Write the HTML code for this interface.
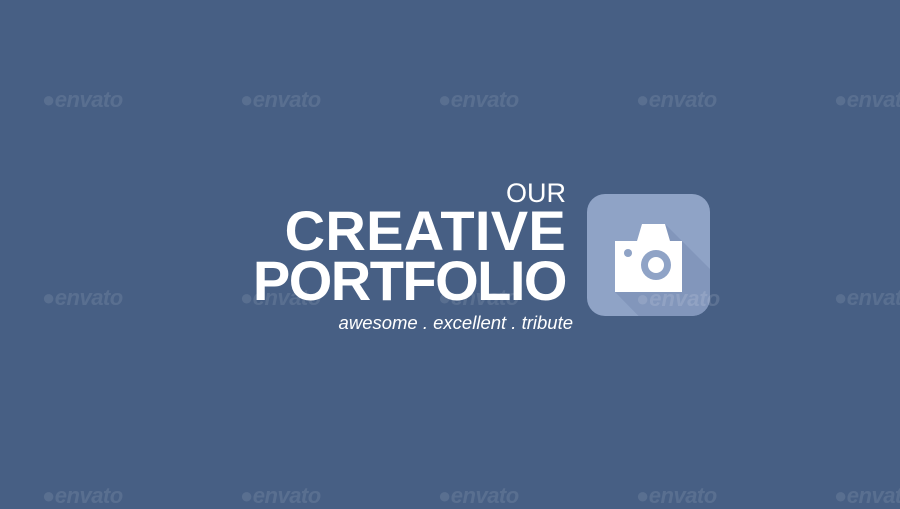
<!DOCTYPE html>
<html><head><style>
html,body{margin:0;padding:0;}
body{width:900px;height:506px;background:#475f84;position:relative;overflow:hidden;font-family:"Liberation Sans",sans-serif;}
.wm{position:absolute;color:rgba(255,255,255,0.1);font:italic bold 22px "Liberation Sans",sans-serif;letter-spacing:-0.5px;}
.t{position:absolute;color:#fff;text-align:right;right:334px;white-space:nowrap;}
</style></head><body>
<div class="wm" style="left:42px;top:87px">●envato</div>
<div class="wm" style="left:240px;top:87px">●envato</div>
<div class="wm" style="left:438px;top:87px">●envato</div>
<div class="wm" style="left:636px;top:87px">●envato</div>
<div class="wm" style="left:834px;top:87px">●envato</div>
<div class="wm" style="left:42px;top:285px">●envato</div>
<div class="wm" style="left:240px;top:285px">●envato</div>
<div class="wm" style="left:438px;top:285px">●envato</div>
<div class="wm" style="left:834px;top:285px">●envato</div>
<div class="wm" style="left:42px;top:483px">●envato</div>
<div class="wm" style="left:240px;top:483px">●envato</div>
<div class="wm" style="left:438px;top:483px">●envato</div>
<div class="wm" style="left:636px;top:483px">●envato</div>
<div class="wm" style="left:834px;top:483px">●envato</div>

<div class="t" style="top:178px;font-size:27px;font-weight:300;">OUR</div>
<div class="t" style="top:203px;font-size:56px;font-weight:bold;line-height:56px;letter-spacing:0.3px;">CREATIVE</div>
<div class="t" style="top:253px;font-size:56px;font-weight:bold;line-height:56px;letter-spacing:-1.5px;">PORTFOLIO</div>
<div class="t" style="top:312px;right:327px;font-size:18.5px;font-style:italic;">awesome . excellent . tribute</div>

<svg style="position:absolute;left:0;top:0" width="900" height="506">
<defs><clipPath id="c"><rect x="587" y="194" width="123" height="122" rx="18"/></clipPath></defs>
<rect x="587" y="194" width="123" height="122" rx="18" fill="#8fa3c6"/>
<g clip-path="url(#c)">
<polygon points="665,224 800,359 800,480 615,292" fill="#8296bb"/>
</g>
<path d="M615 241 H637 L642 224 H665 L670 241 H682 V292 H615 Z" fill="#fff"/>
<circle cx="656" cy="265" r="15" fill="#8fa3c6"/>
<circle cx="656" cy="265" r="8" fill="#fff"/>
<circle cx="628" cy="253" r="4" fill="#8fa3c6"/>
<text x="636" y="306" fill="rgba(255,255,255,0.12)" font-family="Liberation Sans" font-style="italic" font-weight="bold" font-size="22">●envato</text>
</svg>
</body></html>
